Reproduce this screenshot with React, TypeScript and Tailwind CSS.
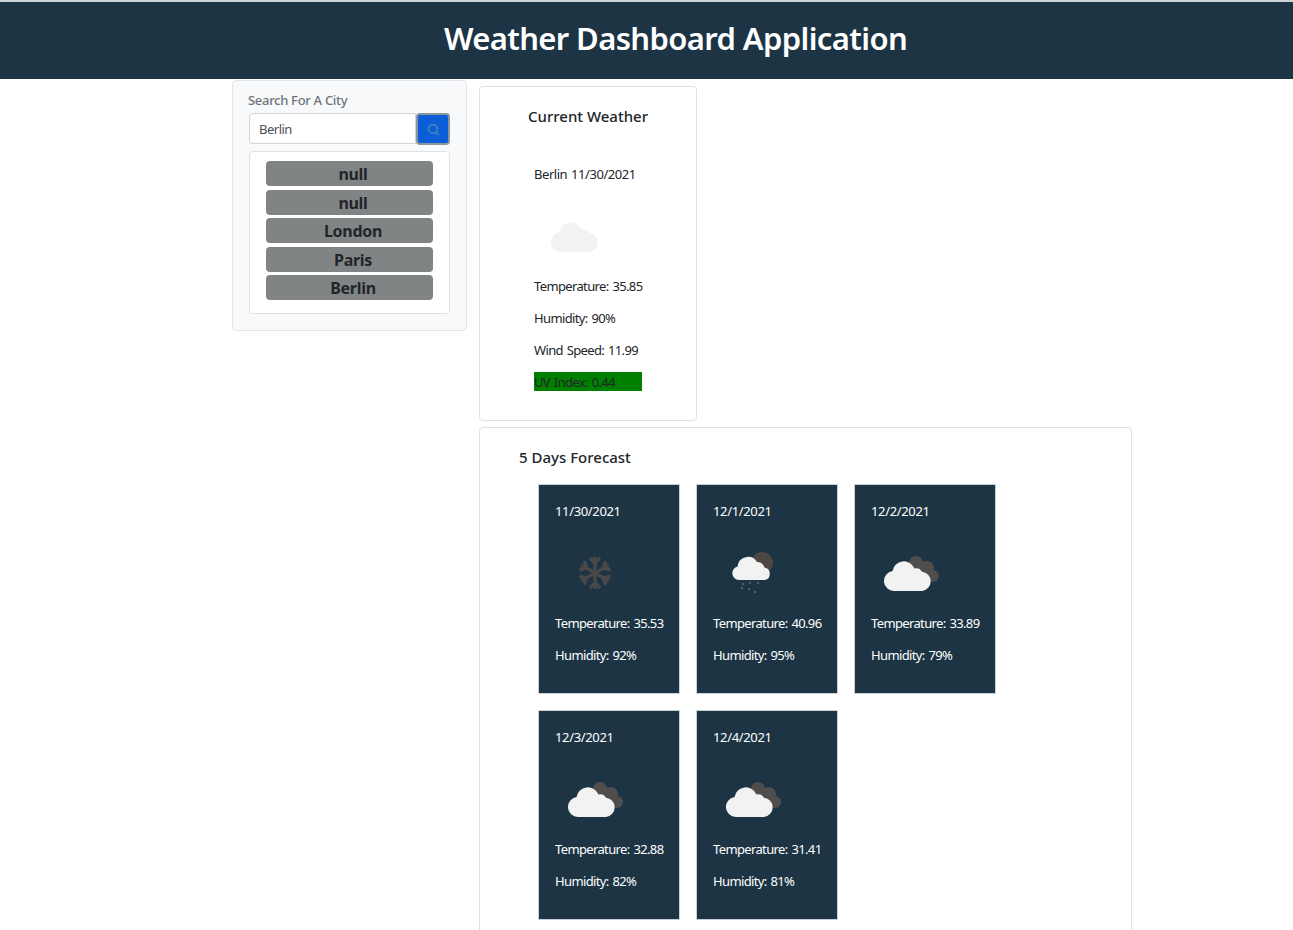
import { Search } from "lucide-react";

const cities = ["null", "null", "London", "Paris", "Berlin"];

const forecast: { date: string; temp: string; humidity: string; icon: "snow" | "rain" | "clouds" }[] = [
  { date: "11/30/2021", temp: "35.53", humidity: "92%", icon: "snow" },
  { date: "12/1/2021", temp: "40.96", humidity: "95%", icon: "rain" },
  { date: "12/2/2021", temp: "33.89", humidity: "79%", icon: "clouds" },
  { date: "12/3/2021", temp: "32.88", humidity: "82%", icon: "clouds" },
  { date: "12/4/2021", temp: "31.41", humidity: "81%", icon: "clouds" },
];

function CloudShape({ fill }: { fill: string }) {
  return (
    <path
      d="M23 59a10 10 0 0 1-1.5-19.9a11.5 11.5 0 0 1 22-2.6a7 7 0 0 1 7.5 3.2A9.7 9.7 0 0 1 51 59z"
      fill={fill}
    />
  );
}

function WeatherIcon({ icon }: { icon: "snow" | "rain" | "clouds" }) {
  if (icon === "snow") {
    return (
      <svg width="80" height="70" viewBox="0 0 80 70" fill="none" stroke="#4a4848" strokeWidth="3.4">
        {[0, 60, 120].map((a) => (
          <g key={a} transform={`rotate(${a} 40 41)`}>
            <path d="M40 25v32" />
            <path d="M35 26l5 5 5-5M35 56l5-5 5 5" />
          </g>
        ))}
      </svg>
    );
  }
  if (icon === "rain") {
    return (
      <svg width="80" height="70" viewBox="0 0 80 70">
        <circle cx="49" cy="31" r="11" fill="#4e4744" />
        <path
          d="M26 48a6.8 6.8 0 0 1-1.5-13.4A10.5 10.5 0 0 1 44 30a8 8 0 0 1 7.5 5.5A6.4 6.4 0 0 1 52 48z"
          fill="#f2f2f2"
        />
        <g fill="#54606a">
          <circle cx="30" cy="52" r="1.2" />
          <circle cx="37" cy="51" r="1.2" />
          <circle cx="45" cy="51" r="1.2" />
          <circle cx="29" cy="56" r="1.2" />
          <circle cx="36" cy="57" r="1.2" />
          <circle cx="42" cy="60" r="1.2" />
        </g>
      </svg>
    );
  }
  return (
    <svg width="80" height="70" viewBox="0 0 80 70">
      <g fill="#504d4d">
        <circle cx="45" cy="31" r="7" />
        <circle cx="56" cy="36" r="7" />
        <circle cx="62" cy="44" r="6" />
        <path d="M40 30h18v16H40z" />
      </g>
      <CloudShape fill="#f2f2f2" />
    </svg>
  );
}

function ForecastCard({ day }: { day: (typeof forecast)[number] }) {
  return (
    <div className="h-[210px] w-[142px] whitespace-nowrap border border-[#c5d0d8] bg-[#1c3444] px-4 pt-[16px] text-[13px] leading-[21px] tracking-[-0.63px] text-white [word-spacing:1px]">
      <p className="mb-[10px] tracking-[-0.35px]">{day.date}</p>
      <div className="mb-[11px] h-[70px]">
        <WeatherIcon icon={day.icon} />
      </div>
      <p className="mb-[11px]">Temperature: {day.temp}</p>
      <p>Humidity: {day.humidity}</p>
    </div>
  );
}

export default function App() {
  return (
    <div className="h-[930px] overflow-hidden bg-white font-['Noto_Sans','Open_Sans',sans-serif] text-[#212529]">
      <header className="flex h-[79px] items-center justify-center border-t-2 border-[#cfd2d3] bg-[#1c3444] pb-[5px] pl-[58px]">
        <h1 className="text-[31px] font-semibold tracking-[-0.62px] text-white">Weather Dashboard Application</h1>
      </header>

      <main className="flex items-start gap-3 pl-[232px] pt-px">
        <aside className="h-[251px] w-[235px] rounded border border-[#e2e5e8] bg-[#f8f9fa] px-4 pt-[9px]">
          <label className="mb-[3px] -ml-px block text-[13px] font-medium leading-[20px] tracking-[-0.3px] text-[#6c757d]">
            Search For A City
          </label>
          <div className="flex items-start">
            <input
              readOnly
              value="Berlin"
              className="h-[31px] w-[167px] rounded-l border border-[#ced4da] bg-white px-[9px] text-[13px] tracking-[-0.5px] text-[#495057] outline-none"
            />
            <button className="flex h-[32px] w-[35px] items-center justify-center rounded border-2 border-[#8b95a0] bg-[#0b5ed7]">
              <Search size={13} strokeWidth={3} className="text-[#4a80b8]" />
            </button>
          </div>
          <div className="mt-[6px] flex h-[163px] w-[201px] flex-col gap-[3.5px] rounded border border-[#dfe1e3] bg-white px-4 pt-[9px]">
            {cities.map((city, i) => (
              <button
                key={i}
                className="h-[25px] rounded bg-[#818485] pl-[7px] text-center text-[16px] font-bold leading-[27px] tracking-[-0.3px] text-[#212529]"
              >
                {city}
              </button>
            ))}
          </div>
        </aside>

        <div className="w-[653px] pt-[6px]">
          <section className="h-[335px] w-[218px] rounded border border-[#dfe1e3] bg-white pt-[17px]">
            <h2 className="text-center text-[15px] font-medium leading-[24px]">Current Weather</h2>
            <div className="ml-[54px] mt-[36px] whitespace-nowrap text-[13px] leading-[21px] tracking-[-0.63px] [word-spacing:1px]">
              <p className="mb-[11px] tracking-[-0.45px]">Berlin 11/30/2021</p>
              <div className="mb-[21px] h-[59px] overflow-hidden pl-[4px]">
                <svg width="80" height="59" viewBox="0 3 80 59">
                  <CloudShape fill="#f2f2f2" />
                </svg>
              </div>
              <p className="mb-[11px]">Temperature: 35.85</p>
              <p className="mb-[11px]">Humidity: 90%</p>
              <p className="mb-[11px]">Wind Speed: 11.99</p>
              <p className="h-[19px] w-[108px] bg-[#008000] leading-[21px]">UV Index: 0.44</p>
            </div>
          </section>

          <section className="mt-[6px] h-[600px] rounded border border-[#dfe1e3] bg-white pl-[38px] pt-[17px]">
            <h2 className="pl-px text-[15px] font-medium leading-[24px]">5 Days Forecast</h2>
            <div className="ml-5 mt-[15px] flex w-[480px] flex-wrap gap-x-4 gap-y-[16px]">
              {forecast.map((day) => (
                <ForecastCard key={day.date} day={day} />
              ))}
            </div>
          </section>
        </div>
      </main>
    </div>
  );
}
